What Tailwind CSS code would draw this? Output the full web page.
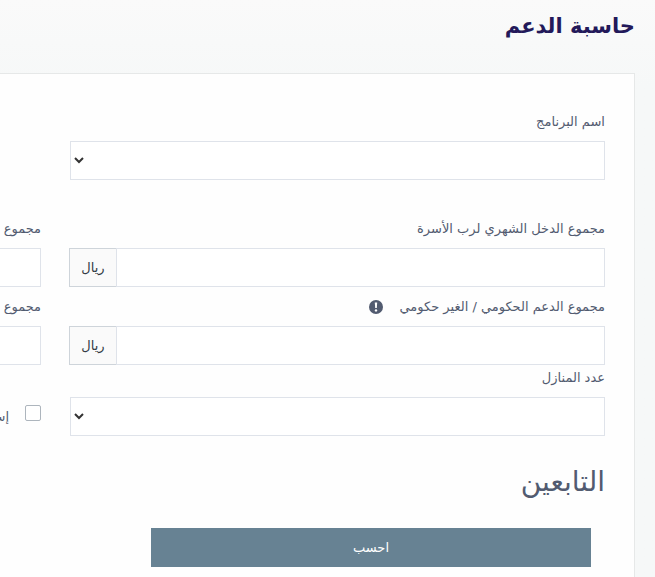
<!DOCTYPE html>
<html lang="ar" dir="rtl">
<head>
    <meta charset="UTF-8">
    <title>حاسبة الدعم</title>
    <meta name="viewport" content="width=device-width, initial-scale=1.0">
    <script src="https://cdn.jsdelivr.net/npm/@tailwindcss/browser@4"></script>
</head>
<body class="min-h-screen overflow-x-hidden bg-[#f6f8f8] font-['DejaVu_Sans',sans-serif] text-[13px] text-[#525b70]">

<div class="h-screen flex flex-col overflow-hidden bg-linear-to-b from-[#fafafa] to-[#f6f8f8] to-15%">
    <h1 class="h-[73px] shrink-0 pt-[6px] pr-5 text-[21px] leading-10 font-bold text-[#23195a]">حاسبة الدعم</h1>

    <main class="mr-5 flex-1 border-t border-r border-[#e6e8e8] bg-[#fefefe] pt-9 pr-[29px]">
        <form id="calcForm">
            <div class="grid grid-cols-[1fr_41px] gap-x-7">
                <div>
                    <label for="program" class="mb-[7px] block leading-6">اسم البرنامج</label>
                    <div class="relative ml-px">
                        <select id="program" class="block h-[39px] w-full appearance-none border border-[#dfe3ea] bg-white px-3"><option></option></select>
                        <svg class="pointer-events-none absolute top-4 left-1 h-[7px] w-[10px]" viewBox="0 0 10 7" fill="none" stroke="#333" stroke-width="2"><path d="M1 1l4 4 4-4"/></svg>
                    </div>
                </div>
            </div>

            <div class="mt-[37px] grid grid-cols-[1fr_41px] gap-x-7">
                <div>
                    <label for="income" class="mb-[7px] block leading-6">مجموع الدخل الشهري لرب الأسرة</label>
                    <div class="flex h-[39px]">
                        <input type="text" id="income" class="min-w-0 flex-1 border border-[#dfe3ea] bg-white px-3">
                        <span class="flex w-[47px] items-center justify-center border border-r-0 border-[#ced4da] bg-[#fafafa] text-[#333b44]">ريال</span>
                    </div>
                </div>
                <div>
                    <label for="income2" class="mb-[7px] block leading-6 whitespace-nowrap">مجموع</label>
                    <input type="text" id="income2" class="block h-[39px] w-full border border-l-0 border-[#dfe3ea] bg-white px-3">
                </div>
            </div>

            <div class="mt-2 grid grid-cols-[1fr_41px] gap-x-7">
                <div>
                    <div class="mb-[7px] flex items-center gap-4 leading-6">
                        <label for="support">مجموع الدعم الحكومي / الغير حكومي</label>
                        <svg class="size-[14px]" viewBox="0 0 14 14"><circle cx="7" cy="7" r="7" fill="#525b70"/><path d="M5.8 2.5h2.4l-.4 5.6H6.2z" fill="#fff"/><circle cx="7" cy="10.4" r="1.2" fill="#fff"/></svg>
                    </div>
                    <div class="flex h-[39px]">
                        <input type="text" id="support" class="min-w-0 flex-1 border border-[#dfe3ea] bg-white px-3">
                        <span class="flex w-[47px] items-center justify-center border border-r-0 border-[#ced4da] bg-[#fafafa] text-[#333b44]">ريال</span>
                    </div>
                </div>
                <div>
                    <label for="support2" class="mb-[7px] block leading-6 whitespace-nowrap">مجموع</label>
                    <input type="text" id="support2" class="block h-[39px] w-full border border-l-0 border-[#dfe3ea] bg-white px-3">
                </div>
            </div>

            <div class="mt-px grid grid-cols-[1fr_41px] gap-x-7">
                <div>
                    <label for="homes" class="mb-[7px] block leading-6">عدد المنازل</label>
                    <div class="relative ml-px">
                        <select id="homes" class="block h-[39px] w-full appearance-none border border-[#dfe3ea] bg-white px-3"><option></option></select>
                        <svg class="pointer-events-none absolute top-4 left-1 h-[7px] w-[10px]" viewBox="0 0 10 7" fill="none" stroke="#333" stroke-width="2"><path d="M1 1l4 4 4-4"/></svg>
                    </div>
                </div>
                <div class="flex items-start gap-4 pt-[39px]">
                    <input type="checkbox" id="housing" class="size-4 shrink-0 appearance-none rounded-xs border border-[#adb5bd] bg-white">
                    <label for="housing" class="leading-6 whitespace-nowrap">إسكان</label>
                </div>
            </div>

            <h2 class="mt-6 text-[28px] leading-11">التابعين</h2>

            <div class="mt-6 grid grid-cols-[1fr_151px]">
                <button type="submit" class="mr-[14px] h-[39px] bg-[#678293] text-white">احسب</button>
            </div>
        </form>
    </main>
</div>

</body>
</html>
